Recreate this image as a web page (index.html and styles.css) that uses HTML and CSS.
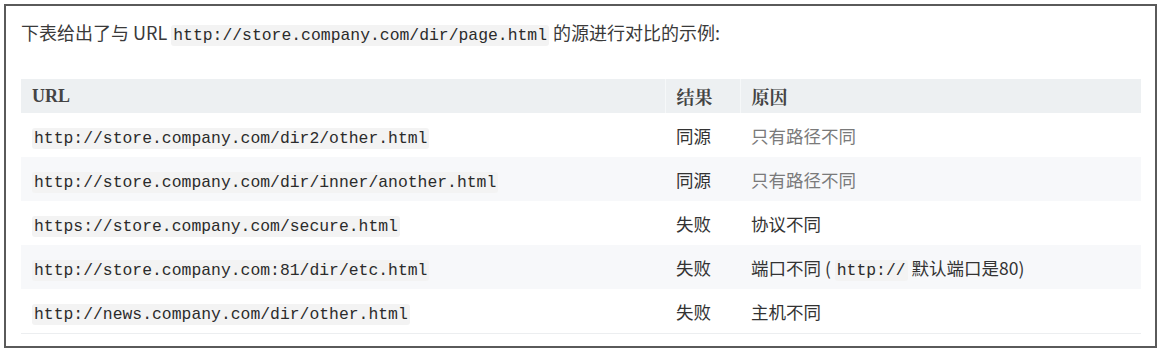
FILE: index.html
```html
<!DOCTYPE html>
<html lang="zh-CN">
<head>
<meta charset="utf-8">
<title>同源对比示例</title>
<link rel="stylesheet" href="styles.css">
</head>
<body>
<div class="frame">
  <p class="intro">下表给出了与 URL <code>http://store.company.com/dir/page.html</code> 的源进行对比的示例:</p>
  <table class="origin">
    <colgroup>
      <col class="c-url">
      <col class="c-res">
      <col class="c-why">
    </colgroup>
    <thead>
      <tr><th>URL</th><th>结果</th><th>原因</th></tr>
    </thead>
    <tbody>
      <tr><td><code>http://store.company.com/dir2/other.html</code></td><td>同源</td><td class="muted">只有路径不同</td></tr>
      <tr class="alt"><td><code>http://store.company.com/dir/inner/another.html</code></td><td>同源</td><td class="muted">只有路径不同</td></tr>
      <tr><td><code>https://store.company.com/secure.html</code></td><td>失败</td><td>协议不同</td></tr>
      <tr class="alt"><td><code>http://store.company.com:81/dir/etc.html</code></td><td>失败</td><td>端口不同 ( <code>http://</code> 默认端口是80)</td></tr>
      <tr><td><code>http://news.company.com/dir/other.html</code></td><td>失败</td><td>主机不同</td></tr>
    </tbody>
  </table>
</div>
</body>
</html>
```

FILE: styles.css
```css
html, body {
  margin: 0;
  padding: 0;
  background: #ffffff;
}

body {
  font-family: "Noto Sans CJK SC", "Noto Sans", sans-serif;
  color: #333333;
}

.frame {
  box-sizing: border-box;
  width: 1153px;
  height: 344px;
  margin: 4px 0 0 4px;
  border: 2px solid #5a5a5a;
  padding: 12px 13px 0 15px;
}

.intro {
  margin: 0;
  font-size: 18px;
  line-height: 28px;
  color: #3a3a3a;
}

code {
  font-family: "Liberation Mono", "DejaVu Sans Mono", monospace;
  font-size: 16.4px;
  background: #f3f3f3;
  color: #2b2b2b;
  padding: 1px 2px;
  border-radius: 3px;
}

.origin {
  margin-top: 29px;
  width: 1120px;
  border-collapse: collapse;
  table-layout: fixed;
}

.c-url { width: 644px; }
.c-res { width: 75px; }
.c-why { width: 401px; }

.origin th {
  height: 34px;
  padding: 0 11px;
  background: #edf0f2;
  text-align: left;
  font-family: "Liberation Serif", "Noto Serif CJK SC", "Noto Sans CJK SC", serif;
  font-weight: bold;
  font-size: 18px;
  color: #444;
  border-left: 1px solid #f6f8f9;
}

.origin th:first-child {
  border-left: none;
}

.origin td {
  height: 44px;
  padding: 0 10px 0 11px;
  font-size: 17.5px;
  color: #333;
  white-space: nowrap;
}

.origin tr.alt td {
  background: #f7f8fa;
}

.origin tbody tr:last-child td {
  border-bottom: 1px solid #eceef0;
}

.origin td.muted {
  color: #7a7a7a;
}
```
